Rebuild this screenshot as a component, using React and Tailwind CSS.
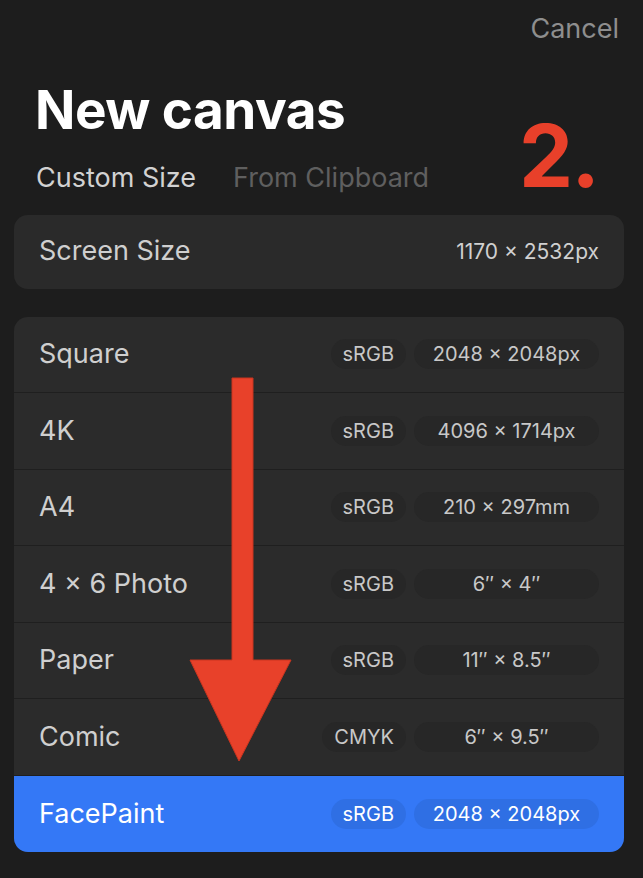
import React from "react";

const presets = [
  { name: "Square", space: "sRGB", size: "2048 × 2048px" },
  { name: "4K", space: "sRGB", size: "4096 × 1714px" },
  { name: "A4", space: "sRGB", size: "210 × 297mm" },
  { name: "4 × 6 Photo", space: "sRGB", size: "6″ × 4″" },
  { name: "Paper", space: "sRGB", size: "11″ × 8.5″" },
  { name: "Comic", space: "CMYK", size: "6″ × 9.5″" },
  { name: "FacePaint", space: "sRGB", size: "2048 × 2048px", selected: true },
];

const PresetRow = ({ preset, last }) => {
  const sel = preset.selected;
  return (
    <div
      className={`flex items-center h-[76.5px] pl-[25px] pr-[25px] ${
        sel ? "bg-[#3478f6]" : ""
      } ${last ? "" : "border-b border-[#1f1f1f]"}`}
    >
      <span
        className={`flex-1 text-[27px] ${sel ? "text-white" : "text-[#cfcfcf]"}`}
      >
        {preset.name}
      </span>
      <span
        className={`h-[30px] flex items-center px-[12px] rounded-full text-[20px] ${
          sel ? "bg-[#2f6fe4] text-white" : "bg-[#272727] text-[#c8c8c8]"
        }`}
      >
        {preset.space}
      </span>
      <span
        className={`ml-[8px] w-[185px] h-[30px] flex items-center justify-center rounded-full text-[20px] ${
          sel ? "bg-[#2f6fe4] text-white" : "bg-[#272727] text-[#c8c8c8]"
        }`}
      >
        {preset.size}
      </span>
    </div>
  );
};

export default function App() {
  return (
    <div className="relative w-[643px] h-[878px] overflow-hidden bg-[#1d1d1d] font-['Inter',sans-serif]">
      {/* header */}
      <div className="flex justify-end pr-[24px] pt-[9px]">
        <span className="text-[27px] text-[#8e8e8e]">Cancel</span>
      </div>
      <h1 className="ml-[35px] mt-[30px] text-[53px] leading-[60px] font-bold text-white tracking-[-0.5px]">
        New canvas
      </h1>
      <div className="flex gap-[37px] ml-[36px] mt-[21px] text-[27px] leading-[34px]">
        <span className="text-[#d2d2d2]">Custom Size</span>
        <span className="text-[#5f5f5f]">From Clipboard</span>
      </div>

      {/* screen size */}
      <div className="ml-[14px] w-[610px] mt-[20px] h-[74px] rounded-[14px] bg-[#2a2a2a] flex items-center justify-between pl-[25px] pr-[25px]">
        <span className="text-[27px] text-[#cfcfcf]">Screen Size</span>
        <span className="text-[21px] text-[#d0d0d0]">1170 × 2532px</span>
      </div>

      {/* presets */}
      <div className="ml-[14px] w-[610px] mt-[28px] rounded-[14px] overflow-hidden bg-[#2b2b2b]">
        {presets.map((p, i) => (
          <PresetRow key={p.name} preset={p} last={i === presets.length - 1} />
        ))}
      </div>

      {/* annotation overlay */}
      <span className="absolute left-[519px] top-[106px] text-[86px] leading-[100px] font-bold text-[#e8402a] tracking-[-2px]">
        2.
      </span>
      <svg
        className="absolute left-0 top-0 pointer-events-none"
        width="643"
        height="878"
        viewBox="0 0 643 878"
      >
        <path
          d="M232 378 H253 V660 H291 L239 761 L190 660 H232 Z"
          fill="#e8412a"
          stroke="#c9351f"
          strokeWidth="1"
        />
      </svg>
    </div>
  );
}
